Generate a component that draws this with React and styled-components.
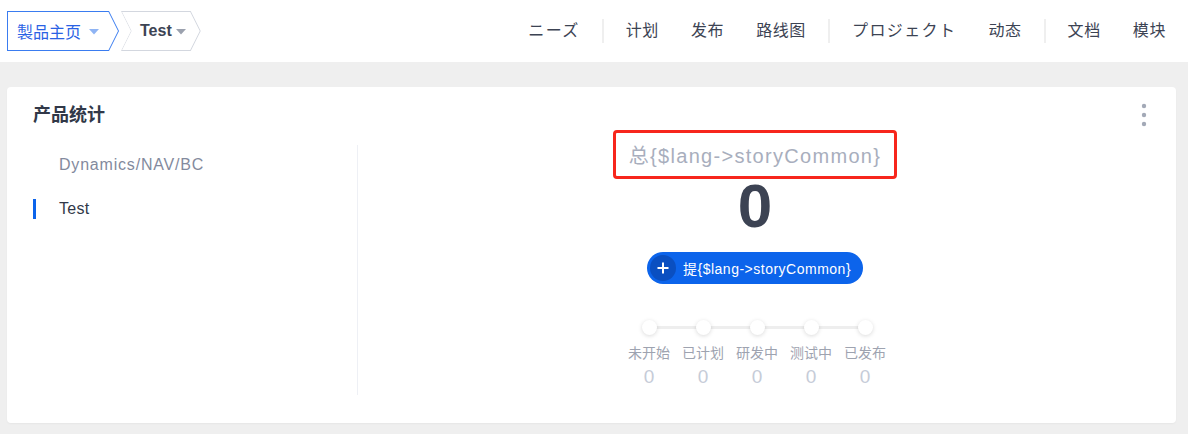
import React from "react";
import styled, { createGlobalStyle } from "styled-components";

const GlobalStyle = createGlobalStyle`
  html, body {
    margin: 0;
    padding: 0;
    background: #efefef;
    font-family: "Liberation Sans", "Noto Sans CJK SC", sans-serif;
    color: #3c4353;
  }
`;

const navGroups = [
  [{ text: "ニーズ", kana: true }],
  [{ text: "计划" }, { text: "发布" }, { text: "路线图" }],
  [{ text: "プロジェクト", kana: true }, { text: "动态" }],
  [{ text: "文档" }, { text: "模块" }],
];

const steps = [
  { label: "未开始", value: 0 },
  { label: "已计划", value: 0 },
  { label: "研发中", value: 0 },
  { label: "测试中", value: 0 },
  { label: "已发布", value: 0 },
];

const products = [
  { name: "Dynamics/NAV/BC", active: false },
  { name: "Test", active: true },
];

function Caret({ color }) {
  return (
    <CaretIcon width="10" height="6" viewBox="0 0 10 6">
      <path d="M0 0 L10 0 L5 5.5 Z" fill={color} />
    </CaretIcon>
  );
}

export default function App() {
  return (
    <>
      <GlobalStyle />
      <Header>
        <Crumbs>
          <Crumb $first $active>
            <CrumbInner $first>
              <CrumbText $active>製品主页</CrumbText>
              <Caret color="#8fb4f4" />
            </CrumbInner>
          </Crumb>
          <Crumb>
            <CrumbInner>
              <CrumbText>Test</CrumbText>
              <Caret color="#9ba1ae" />
            </CrumbInner>
          </Crumb>
        </Crumbs>
        <Nav>
          {navGroups.map((group, gi) => (
            <React.Fragment key={gi}>
              {gi > 0 && <NavDivider />}
              {group.map((item) => (
                <NavItem key={item.text} $kana={item.kana}>
                  {item.text}
                </NavItem>
              ))}
            </React.Fragment>
          ))}
        </Nav>
      </Header>
      <Main>
        <Card>
          <CardTitle>产品统计</CardTitle>
          <Kebab width="6" height="24" viewBox="0 0 6 24">
            <circle cx="3" cy="3" r="2.2" fill="#a3a9b7" />
            <circle cx="3" cy="12" r="2.2" fill="#a3a9b7" />
            <circle cx="3" cy="21" r="2.2" fill="#a3a9b7" />
          </Kebab>
          <CardBody>
            <ProductList>
              {products.map((p) => (
                <ProductItem key={p.name} $active={p.active}>
                  {p.name}
                </ProductItem>
              ))}
            </ProductList>
            <StatPanel>
              <TotalLabel>总{"{$lang->storyCommon}"}</TotalLabel>
              <TotalValue>0</TotalValue>
              <CreateButton>
                <PlusCircle>
                  <svg width="12" height="12" viewBox="0 0 12 12">
                    <path d="M6 0.5 V11.5 M0.5 6 H11.5" stroke="#fff" strokeWidth="2" />
                  </svg>
                </PlusCircle>
                提{"{$lang->storyCommon}"}
              </CreateButton>
              <Steps>
                {steps.map((s, i) => (
                  <Step key={s.label} $last={i === steps.length - 1}>
                    <Dot />
                    <StepLabel>{s.label}</StepLabel>
                    <StepValue>{s.value}</StepValue>
                  </Step>
                ))}
              </Steps>
            </StatPanel>
          </CardBody>
        </Card>
      </Main>
    </>
  );
}

const Header = styled.div`
  height: 62px;
  background: #fff;
  display: flex;
  align-items: center;
  justify-content: space-between;
  padding: 0 6px 0 7px;
`;

const Crumbs = styled.div`
  display: flex;
  align-items: center;
`;

const Crumb = styled.div`
  padding: 1px;
  height: 38px;
  background: ${(p) => (p.$active ? "#3a7cf0" : "#d3d7df")};
  margin-left: ${(p) => (p.$first ? "0" : "2px")};
  clip-path: ${(p) =>
    p.$first
      ? "polygon(0 0, calc(100% - 10px) 0, 100% 50%, calc(100% - 10px) 100%, 0 100%)"
      : "polygon(0 0, calc(100% - 10px) 0, 100% 50%, calc(100% - 10px) 100%, 0 100%, 10px 50%)"};
`;

const CrumbInner = styled.div`
  height: 38px;
  background: #fff;
  display: flex;
  align-items: center;
  gap: ${(p) => (p.$first ? "8px" : "4px")};
  padding: ${(p) => (p.$first ? "0 19px 0 9px" : "0 14px 0 18px")};
  clip-path: ${(p) =>
    p.$first
      ? "polygon(0 0, calc(100% - 9.5px) 0, 100% 50%, calc(100% - 9.5px) 100%, 0 100%)"
      : "polygon(0 0, calc(100% - 9.5px) 0, 100% 50%, calc(100% - 9.5px) 100%, 0 100%, 9.5px 50%)"};
`;

const CrumbText = styled.span`
  font-size: 16px;
  font-weight: ${(p) => (p.$active ? 400 : 700)};
  color: ${(p) => (p.$active ? "#2a62e4" : "#3c4353")};
`;

const CaretIcon = styled.svg`
  display: block;
  margin-top: 2px;
`;

const Nav = styled.div`
  display: flex;
  align-items: center;
`;

const NavItem = styled.div`
  padding: 0 16px;
  font-size: 16px;
  letter-spacing: ${(p) => (p.$kana ? "1.4px" : "0.6px")};
  color: #3c4353;
  line-height: 24px;
`;

const NavDivider = styled.div`
  width: 2px;
  height: 24px;
  background: #efefef;
  margin: 0 6px;
`;

const Main = styled.div`
  padding: 25px 12px 11px 7px;
`;

const Card = styled.div`
  position: relative;
  background: #fff;
  border-radius: 4px;
  box-shadow: 0 1px 2px rgba(0, 0, 0, 0.04);
  padding: 16px 24px 28px 26px;
`;

const CardTitle = styled.div`
  font-size: 18px;
  font-weight: 700;
  line-height: 24px;
  color: #313848;
  margin-bottom: 3px;
`;

const Kebab = styled.svg`
  position: absolute;
  top: 16px;
  right: 29px;
`;

const CardBody = styled.div`
  display: flex;
`;

const ProductList = styled.div`
  width: 324px;
  margin-top: 15px;
  height: 250px;
  border-right: 1px solid #eef0f5;
  display: flex;
  flex-direction: column;
  gap: 4px;
`;

const ProductItem = styled.div`
  position: relative;
  height: 40px;
  display: flex;
  align-items: center;
  padding-left: 26px;
  font-size: 16px;
  letter-spacing: ${(p) => (p.$active ? "0.3px" : "0.8px")};
  color: ${(p) => (p.$active ? "#313848" : "#838a9d")};

  &::before {
    content: "";
    display: ${(p) => (p.$active ? "block" : "none")};
    position: absolute;
    left: 0;
    top: 10px;
    width: 3px;
    height: 20px;
    background: #0c64eb;
  }
`;

const StatPanel = styled.div`
  flex: 1;
  display: flex;
  flex-direction: column;
  align-items: center;
`;

const TotalLabel = styled.div`
  box-sizing: border-box;
  height: 49px;
  width: 284px;
  border: 3px solid #f7261c;
  border-radius: 4px;
  display: flex;
  align-items: center;
  justify-content: center;
  font-size: 20px;
  letter-spacing: 1.3px;
  color: #a8aebd;
`;

const TotalValue = styled.div`
  font-size: 62px;
  line-height: 52px;
  font-weight: 700;
  color: #3c4353;
  margin-top: 1px;
`;

const CreateButton = styled.div`
  margin-top: 20px;
  height: 32px;
  width: 216px;
  box-sizing: border-box;
  border-radius: 16px;
  background: #0c64eb;
  color: #fff;
  display: flex;
  align-items: center;
  gap: 7px;
  padding-left: 3px;
  font-size: 14px;
  letter-spacing: 0.5px;
`;

const PlusCircle = styled.span`
  width: 26px;
  height: 26px;
  border-radius: 50%;
  background: #0a4fc1;
  display: flex;
  align-items: center;
  justify-content: center;
`;

const Steps = styled.div`
  margin-top: 36px;
  display: flex;
  margin-left: 4px;
`;

const Step = styled.div`
  position: relative;
  width: 54px;
  display: flex;
  flex-direction: column;
  align-items: center;

  &::after {
    content: "";
    display: ${(p) => (p.$last ? "none" : "block")};
    position: absolute;
    top: 6px;
    left: 27px;
    width: 54px;
    height: 3px;
    background: #eeeeee;
  }
`;

const Dot = styled.div`
  position: relative;
  z-index: 1;
  width: 15px;
  height: 15px;
  border-radius: 50%;
  background: #fff;
  box-shadow: 0 1px 4px rgba(0, 0, 0, 0.15);
`;

const StepLabel = styled.div`
  margin-top: 8px;
  font-size: 14px;
  line-height: 20px;
  color: #9ea3b0;
  white-space: nowrap;
`;

const StepValue = styled.div`
  margin-top: 3px;
  font-size: 19px;
  line-height: 22px;
  color: #c6ccd8;
`;
